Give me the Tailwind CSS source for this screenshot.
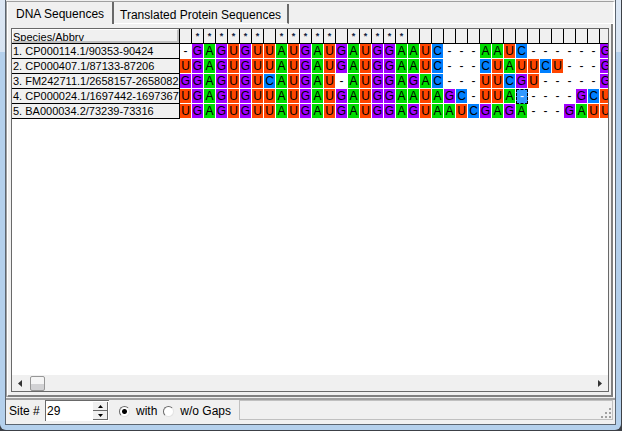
<!DOCTYPE html>
<html lang="en">
<head>
<meta charset="utf-8">
<title>Alignment Explorer</title>
<script src="https://cdn.jsdelivr.net/npm/@tailwindcss/browser@4"></script>
</head>
<body class="h-screen overflow-hidden bg-[#3c4046] font-['Liberation_Sans',Arial,sans-serif] text-xs text-black">
<div class="h-screen pr-px pb-px">
<div class="flex h-full flex-col rounded-b-md bg-linear-to-b from-[#dce7f4] from-0% via-[#d8e4f2] via-12% to-[#b4d0ec] to-12% px-[5px] pb-[5px]">
<main class="flex min-h-0 flex-1 flex-col border border-t-0 border-[#5b6570] bg-[#f0f0f0]">
  <section class="mt-px flex min-h-0 flex-1 flex-col border-t border-l border-[#a0a0a0] border-r-2 border-r-white">
    <div role="tablist" class="flex h-[22px] items-end leading-4">
      <button role="tab" aria-selected="true" class="h-[22px] border-r-2 border-l border-r-[#696969] border-l-white px-2 pt-1 pb-0.5">DNA Sequences</button>
      <button role="tab" aria-selected="false" class="h-5 border-r-2 border-b border-r-[#696969] border-b-white px-1.5 pt-[3px]">Translated Protein Sequences</button>
      <div class="h-px flex-1 bg-white"></div>
    </div>
    <div role="tabpanel" class="flex min-h-0 flex-1 flex-col border-r-2 border-b-2 border-l border-[#808080] border-l-white pt-1 pr-0.5 pb-[3px] pl-[3px]">
      <div class="flex min-h-0 flex-1 flex-col border border-[#696969] bg-white">
        <div class="min-h-0 flex-1 overflow-hidden">
          <table class="w-[600px] table-fixed border-separate border-spacing-0">
            <colgroup id="cols"><col class="w-[168px]"></colgroup>
            <thead id="head"></thead>
            <tbody id="rows"></tbody>
          </table>
        </div>
        <div class="flex h-4 items-center justify-between bg-[#f0f0f0] px-1.5">
          <div class="flex items-center gap-2">
            <button aria-label="Scroll left"><svg class="h-[7px] w-1" viewBox="0 0 4 7"><path d="M4 0v7L0 3.5z" fill="#333"/></svg></button>
            <div class="h-[15px] w-[15px] rounded-xs border border-[#979797] bg-linear-to-b from-[#f5f5f5] from-50% to-[#d2d2d4] to-50%"></div>
          </div>
          <button aria-label="Scroll right"><svg class="h-[7px] w-1" viewBox="0 0 4 7"><path d="M0 0v7l4-3.5z" fill="#333"/></svg></button>
        </div>
      </div>
    </div>
  </section>
  <footer class="mt-px flex h-[26px] items-start border-t-2 border-[#a0a0a0] pr-0.5 pl-[3px]">
    <label for="site" class="w-9 pt-[3px] leading-4">Site #</label>
    <div class="flex h-[21px] w-16 border-t border-l border-[#696969] bg-white">
      <input id="site" type="text" value="29" class="min-w-0 flex-1 pl-px leading-4 outline-none">
      <div class="my-px mr-px flex w-[15px] flex-col">
        <button aria-label="Next site" class="flex flex-1 items-center justify-center border-r border-b border-[#696969] bg-[#f0f0f0]"><svg class="h-[3px] w-[5px]" viewBox="0 0 5 3"><path d="M0 3h5L2.5 0z"/></svg></button>
        <button aria-label="Previous site" class="flex flex-1 items-center justify-center border-r border-b border-[#696969] bg-[#f0f0f0]"><svg class="h-[3px] w-[5px]" viewBox="0 0 5 3"><path d="M0 0h5L2.5 3z"/></svg></button>
      </div>
    </div>
    <label class="ml-2.5 flex items-center gap-1.5 pt-[3px] leading-4"><input type="radio" name="gaps" checked class="size-[11px] appearance-none rounded-full border border-t-[#696969] border-r-[#e3e3e3] border-b-[#e3e3e3] border-l-[#696969] bg-white bg-[radial-gradient(circle,black_2px,transparent_3px)]">with</label>
    <label class="ml-1.5 flex items-center gap-1.5 pt-[3px] leading-4"><input type="radio" name="gaps" class="size-[11px] appearance-none rounded-full border border-t-[#696969] border-r-[#e3e3e3] border-b-[#e3e3e3] border-l-[#696969] bg-white">w/o Gaps</label>
    <div class="ml-2 flex h-5 flex-1 items-end justify-end border border-[#c0c0c0] p-px">
      <svg class="size-[10px]" viewBox="0 0 10 10" fill="#a0a0a0"><path d="M8 0h2v2H8zM8 4h2v2H8zM8 8h2v2H8zM4 4h2v2H4zM4 8h2v2H4zM0 8h2v2H0z"/></svg>
    </div>
  </footer>
</main>
</div>
</div>
<script>
const conserved = ' ****** ***** *****                  ';
const species = [
  ['1. CP000114.1/90353-90424', '-GAGUGUUAUGAUGAUGGAAUC---AAUC------G'],
  ['2. CP000407.1/87133-87206', 'UGAGUGUUAUGAUGAUGGAAUC---CUAUUCU---G'],
  ['3. FM242711.1/2658157-2658082', 'GGAGUGUCAUGAU-AUGGAGAC---UUCGU-----G'],
  ['4. CP000024.1/1697442-1697367', 'UGAGUGUUAUGAUGAUGGAAUAGC-UUA-----GCU'],
  ['5. BA000034.2/73239-73316', 'UGAGUGUUAUGAUGAUGGAGUAAUCGAGA---GAUU']
];
const fill = { A: 'bg-[#00dc00]', C: 'bg-[#0080ff]', G: 'bg-[#a000ff]', U: 'bg-[#ff4500]', '-': 'bg-white' };
const sites = [...species[0][1]];
document.getElementById('cols').innerHTML += sites.map(() => '<col class="w-[12px]">').join('');
document.getElementById('head').innerHTML = '<tr><th scope="col" class="h-[15px] border-r border-b border-black bg-[#f0f0f0] p-0 text-left text-[11px] font-normal"><div class="h-[14px] overflow-hidden border-t border-l border-r-2 border-b-2 border-t-white border-l-white border-r-[#c0c0c0] border-b-[#c0c0c0] leading-[14px]">Species/Abbrv</div></th>' +
  sites.map((s, i) => `<th class="h-[15px] border-r border-b border-black bg-[#f0f0f0] p-0 pt-px text-center align-top text-[9px] leading-[13px] font-bold text-[#102040]">${conserved[i]}</th>`).join('') + '</tr>';
document.getElementById('rows').innerHTML = species.map(([name, seq], r) =>
  `<tr><th scope="row" class="h-[15px] border-r border-b border-black bg-[#f0f0f0] p-0 pt-px pl-px text-left text-[11px] leading-[13px] font-normal whitespace-nowrap">${name}</th>` +
  [...seq].map((b, i) => r === 3 && i === 28
    ? `<td class="h-[15px] border border-dashed border-black bg-[#3399ff] p-0 text-center leading-[13px] text-white">${b}</td>`
    : `<td class="h-[15px] border-r border-b border-white p-0 pt-px text-center leading-[13px] ${fill[b]}">${b}</td>`).join('') + '</tr>').join('');
</script>
</body>
</html>
